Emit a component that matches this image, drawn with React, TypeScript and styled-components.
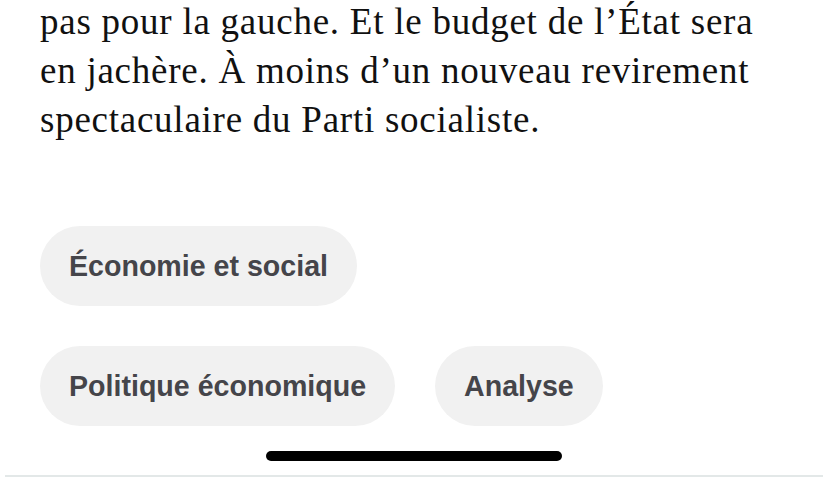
import React from "react";
import styled, { createGlobalStyle } from "styled-components";

const Global = createGlobalStyle`
  html, body { margin: 0; padding: 0; background: #ffffff; }
  body { width: 828px; height: 477px; overflow: hidden; }
`;

const Page = styled.div`
  width: 828px;
  height: 477px;
  display: flex;
  flex-direction: column;
  overflow: hidden;
`;

const Article = styled.div`
  padding: 0 40px;
  display: flex;
  flex-direction: column;
`;

const Paragraph = styled.p`
  margin: -3px 0 0 0;
  font-family: "Liberation Serif", "Times New Roman", serif;
  font-size: 37px;
  letter-spacing: 0.75px;
  line-height: 49px;
  color: #111111;
`;

const TagGroups = styled.div`
  margin-top: 82px;
  display: flex;
  flex-direction: column;
  gap: 40px;
`;

const TagRow = styled.div`
  display: flex;
  flex-wrap: wrap;
  gap: 40px;
`;

const Tag = styled.a`
  height: 80px;
  padding: 0 29px;
  border-radius: 40px;
  background: #f1f1f1;
  display: inline-flex;
  align-items: center;
  font-family: "Liberation Sans", Arial, sans-serif;
  font-weight: 700;
  font-size: 28.6px;
  color: #45454a;
  text-decoration: none;
`;

const Footer = styled.div`
  margin-top: auto;
  display: flex;
  flex-direction: column;
  align-items: center;
`;

const HomeIndicator = styled.div`
  width: 296px;
  height: 10px;
  border-radius: 5px;
  background: #000000;
`;

const Divider = styled.div`
  align-self: stretch;
  margin: 14px 5px 0;
  height: 2px;
  background: #e3e8e8;
`;

export default function App() {
  return (
    <>
      <Global />
      <Page>
        <Article>
          <Paragraph>
            pas pour la gauche. Et le budget de l’État sera en jachère. À moins
            d’un nouveau revirement spectaculaire du Parti socialiste.
          </Paragraph>
          <TagGroups>
            <TagRow>
              <Tag href="#">Économie et social</Tag>
            </TagRow>
            <TagRow>
              <Tag href="#">Politique économique</Tag>
              <Tag href="#">Analyse</Tag>
            </TagRow>
          </TagGroups>
        </Article>
        <Footer>
          <HomeIndicator />
          <Divider />
        </Footer>
      </Page>
    </>
  );
}
